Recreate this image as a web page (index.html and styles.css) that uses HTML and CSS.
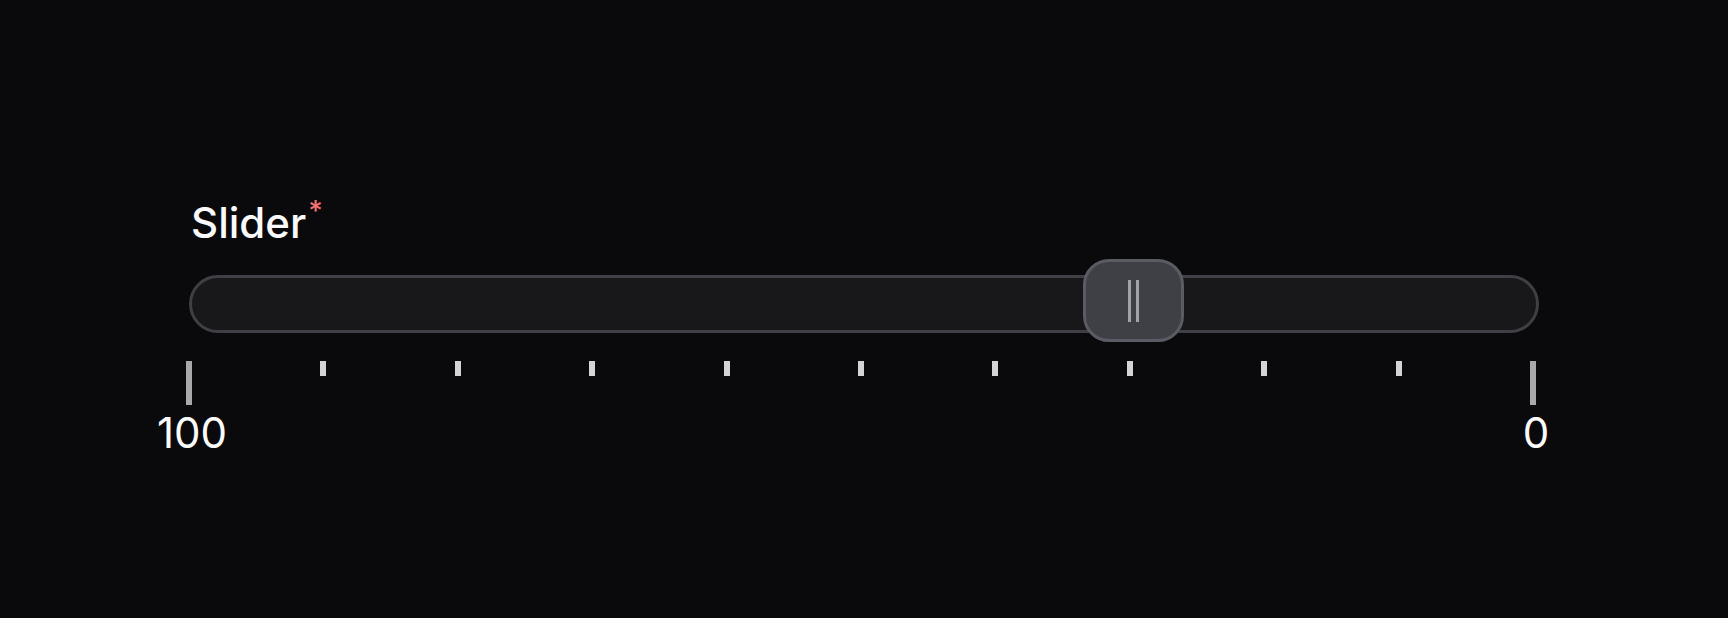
FILE: index.html
```html
<!DOCTYPE html>
<html lang="en">
<head>
    <meta charset="UTF-8">
    <meta name="viewport" content="width=device-width, initial-scale=1.0">
    <title>Slider</title>
    <link rel="stylesheet" href="styles.css">
</head>
<body>
    <div class="field">
        <label class="field-label">Slider<span class="required">*</span></label>

        <div class="track">
            <div class="thumb">
                <span class="grip"></span>
                <span class="grip"></span>
            </div>
        </div>

        <div class="scale">
            <div class="step">
                <span class="tick major"></span>
                <span class="step-label">100</span>
            </div>
            <div class="step"><span class="tick"></span></div>
            <div class="step"><span class="tick"></span></div>
            <div class="step"><span class="tick"></span></div>
            <div class="step"><span class="tick"></span></div>
            <div class="step"><span class="tick"></span></div>
            <div class="step"><span class="tick"></span></div>
            <div class="step"><span class="tick"></span></div>
            <div class="step"><span class="tick"></span></div>
            <div class="step"><span class="tick"></span></div>
            <div class="step">
                <span class="tick major"></span>
                <span class="step-label">0</span>
            </div>
        </div>
    </div>
</body>
</html>
```

FILE: styles.css
```css
* {
    margin: 0;
    padding: 0;
    box-sizing: border-box;
    font-family: 'Inter', 'Noto Sans', sans-serif;
}

body {
    background-color: #0a0a0c;
    height: 100vh;
    overflow: hidden;
    padding-top: 197px;
}

.field {
    width: 1350px;
    margin: 0 auto;
}

.field-label {
    display: block;
    padding-left: 2px;
    font-size: 42px;
    line-height: 50px;
    font-weight: 500;
    color: #fafafa;
    margin-bottom: 27px;
}

.required {
    font-size: 28px;
    line-height: 1;
    color: #f87171;
    vertical-align: 17px;
    margin-left: 2px;
}

/* track + handle */
.track {
    position: relative;
    height: 58px;
    background-color: #18181b;
    border: 3px solid #3f3f46;
    border-radius: 29px;
}

.thumb {
    position: absolute;
    top: -19px;
    left: calc(70% - 50px);
    width: 101px;
    height: 83px;
    background-color: #3f3f46;
    border: 3px solid #5b5b64;
    border-radius: 26px;
    display: flex;
    justify-content: center;
    align-items: center;
    gap: 5px;
}

.grip {
    width: 3px;
    height: 42px;
    background-color: #a1a1aa;
}

/* tick marks under the track */
.scale {
    display: flex;
    justify-content: space-between;
    width: 1350px;
    margin-left: -3px;
    margin-top: 28px;
}

.step {
    width: 6px;
    display: flex;
    flex-direction: column;
    align-items: center;
}

.tick {
    width: 6px;
    height: 15px;
    background-color: #d4d4d8;
}

.tick.major {
    height: 44px;
    background-color: #a8a8ad;
}

.step-label {
    margin-top: 3px;
    padding-left: 6px;
    font-size: 42px;
    line-height: 50px;
    color: #fafafa;
    white-space: nowrap;
}
```
